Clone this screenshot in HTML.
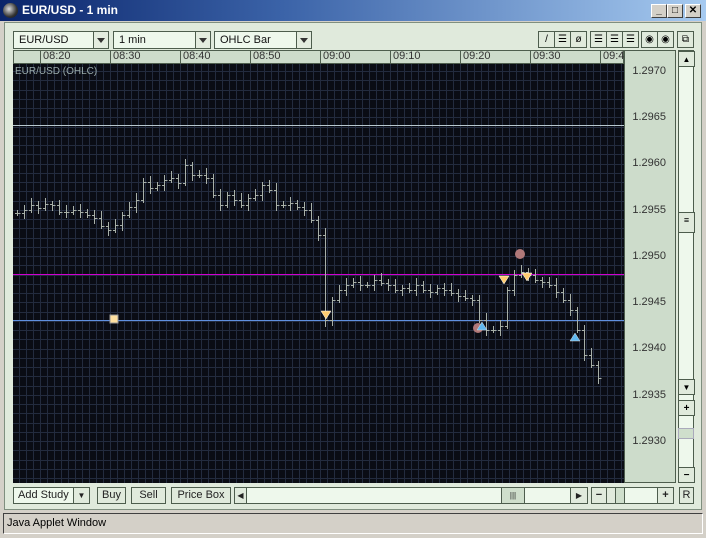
<!DOCTYPE html>
<html><head><style>
*{margin:0;padding:0;box-sizing:border-box}
body{width:706px;height:538px;overflow:hidden;background:#d4d0c8;font-family:"Liberation Sans",sans-serif;font-size:11px;position:relative}
.a{position:absolute}
.title{left:0;top:0;width:706px;height:21px;background:linear-gradient(90deg,#0a246a,#3b63a8 40%,#a6caf0);color:#fff;font-weight:bold;font-size:12px;line-height:21px;padding-left:22px}
.tb{width:16px;height:14px;top:4px;background:#d4d0c8;border:1px solid;border-color:#fff #404040 #404040 #fff;color:#000;font-size:10px;text-align:center;line-height:12px;font-weight:bold}
.main{left:4px;top:22px;width:698px;height:488px;background:#e0eadc;border:1px solid #7f8f7f}
.dd{height:18px;top:31px;background:#eef8ec;border:1px solid #4d5d4d;padding-left:5px;line-height:16px;color:#111}
.dd i{position:absolute;right:0;top:0;width:15px;height:16px;border-left:1px solid #4d5d4d;background:#e3ecdf}
.dd i:after{content:"";position:absolute;left:3px;top:6px;border:4px solid transparent;border-top:5px solid #333;border-bottom:0}
.btn{height:17px;top:487px;background:#e0eadc;border:1px solid #4d5d4d;text-align:center;line-height:15px;color:#222}
.ib{top:31px;width:17px;height:17px;border:1px solid #4d5d4d;background:#e0eadc;font-size:10px;text-align:center;line-height:15px}
.axis{background:#cddccb}
.tl{top:50px;height:14px;border-left:1px solid #4d5d4d;padding-left:2px;line-height:13px;color:#333}
.pl{left:626px;width:40px;text-align:right;color:#333}
</style></head><body>
<div class="a title">EUR/USD - 1 min</div>
<div class="a" style="left:3px;top:3px;width:15px;height:15px;border-radius:50%;background:radial-gradient(circle at 40% 40%,#ddd,#333 60%,#111)"></div>
<div class="a tb" style="left:651px">_</div>
<div class="a tb" style="left:667px">□</div>
<div class="a tb" style="left:685px">✕</div>
<div class="a main"></div>
<div class="a dd" style="left:13px;width:96px">EUR/USD<i></i></div>
<div class="a dd" style="left:113px;width:98px">1 min<i></i></div>
<div class="a dd" style="left:214px;width:98px">OHLC Bar<i></i></div>
<div class="a ib" style="left:538px">/</div><div class="a ib" style="left:554px">☰</div><div class="a ib" style="left:570px">ø</div>
<div class="a ib" style="left:590px">☰</div><div class="a ib" style="left:606px">☰</div><div class="a ib" style="left:622px">☰</div>
<div class="a ib" style="left:641px">◉</div><div class="a ib" style="left:657px">◉</div>
<div class="a ib" style="left:677px">⧉</div>
<div class="a axis" style="left:13px;top:50px;width:611px;height:14px;border:1px solid #4d5d4d"></div>
<div class="a axis" style="left:624px;top:50px;width:52px;height:433px;border:1px solid #4d5d4d"></div>
<div class="a tl" style="left:40px">08:20</div><div class="a tl" style="left:110px">08:30</div><div class="a tl" style="left:180px">08:40</div><div class="a tl" style="left:250px">08:50</div><div class="a tl" style="left:320px">09:00</div><div class="a tl" style="left:390px">09:10</div><div class="a tl" style="left:460px">09:20</div><div class="a tl" style="left:530px">09:30</div><div class="a tl" style="left:600px;width:24px;overflow:hidden">09:4</div>
<div class="a pl" style="top:65px">1.2970</div><div class="a pl" style="top:111px">1.2965</div><div class="a pl" style="top:157px">1.2960</div><div class="a pl" style="top:204px">1.2955</div><div class="a pl" style="top:250px">1.2950</div><div class="a pl" style="top:296px">1.2945</div><div class="a pl" style="top:342px">1.2940</div><div class="a pl" style="top:389px">1.2935</div><div class="a pl" style="top:435px">1.2930</div>
<svg class="a" style="left:13px;top:64px" width="611" height="419" id="ch">
<rect width="611" height="419" fill="#0a0c14"/>
<g id="grid"></g>
<text x="2" y="10" fill="#9aa" font-size="10" font-family="Liberation Sans">EUR/USD (OHLC)</text>
<line x1="0" x2="611" y1="61.5" y2="61.5" stroke="#b8c8d0"/>
<line x1="0" x2="611" y1="210.5" y2="210.5" stroke="#d000d0"/>
<line x1="0" x2="611" y1="256.5" y2="256.5" stroke="#6090e0"/>
<g id="bars" stroke="#a8b0a8" fill="none"></g>
<rect x="97" y="251" width="8" height="8" fill="#ffe0a0" stroke="#999"/>
<circle cx="465" cy="264" r="5" fill="#b07878"/><circle cx="507" cy="190" r="5" fill="#b07878"/>
<path d="M308 247h10l-5 8z M486 212h10l-5 8z M509 209h10l-5 8z" fill="#ffcc70" stroke="#fff" stroke-width=".5"/>
<path d="M464 266h10l-5-8z M557 277h10l-5-8z" fill="#60b8f0" stroke="#ddd" stroke-width=".5"/>
</svg>
<div class="a" style="left:678px;top:50px;width:16px;height:433px;background:#eef8ec;border:1px solid #4d5d4d"></div>
<div class="a ib" style="left:678px;top:51px;height:16px;font-size:8px">▲</div>
<div class="a ib" style="left:678px;top:212px;height:21px;font-size:9px">≡</div>
<div class="a ib" style="left:678px;top:379px;height:16px;font-size:8px">▼</div>
<div class="a ib" style="left:678px;top:400px;height:16px;font-weight:bold">+</div>
<div class="a" style="left:678px;top:428px;width:16px;height:11px;background:#cfdfcc;border:1px solid #aab"></div>
<div class="a ib" style="left:678px;top:467px;height:16px;font-weight:bold">−</div>
<div class="a btn" style="left:13px;width:77px;background:#eef8ec;text-align:left;padding-left:4px">Add Study</div>
<div class="a btn" style="left:73px;width:17px;font-size:8px">▼</div>
<div class="a btn" style="left:97px;width:29px">Buy</div>
<div class="a btn" style="left:131px;width:35px">Sell</div>
<div class="a btn" style="left:171px;width:60px">Price Box</div>
<div class="a btn" style="left:234px;width:354px;background:#eef8ec"></div>
<div class="a btn" style="left:234px;width:13px;font-size:8px">◀</div>
<div class="a btn" style="left:501px;width:24px;background:#cfdfcc;font-size:8px">|||</div>
<div class="a btn" style="left:570px;width:18px;font-size:8px">▶</div>
<div class="a btn" style="left:591px;width:83px;background:#eef8ec"></div>
<div class="a btn" style="left:591px;width:16px;font-weight:bold">−</div>
<div class="a btn" style="left:606px;width:10px"></div>
<div class="a btn" style="left:615px;width:10px;background:#cfdfcc"></div>
<div class="a btn" style="left:657px;width:17px;font-weight:bold">+</div>
<div class="a btn" style="left:679px;width:15px">R</div>
<div class="a" style="left:3px;top:513px;width:700px;height:21px;border:1px solid;border-color:#404040 #fff #fff #404040;padding-left:3px;line-height:19px;font-size:11px;color:#000">Java Applet Window</div>
<script>
var g=document.getElementById("grid"),s="";
for(var x=0;x<611;x+=7){var m=((x+13-40)%70==0);var xx=x+0.5+((40-13)%7);s+='<line x1="'+xx+'" x2="'+xx+'" y1="0" y2="419" stroke="'+(m?'#3a4660':'#232b3e')+'"/>';}
for(var y=7;y<419;y+=9.25){var yy=Math.round(y)+.5;s+='<line x1="0" x2="611" y1="'+yy+'" y2="'+yy+'" stroke="#232b3e"/>';}
g.innerHTML=s;
var c=[213,210,205,208,204,205,212,212,210,212,215,218,226,230,225,215,207,200,182,188,185,180,178,183,165,175,175,178,195,205,195,200,205,198,195,185,190,205,205,203,207,210,220,235,320,300,290,285,282,285,285,280,283,285,290,288,290,285,290,292,288,290,293,296,298,300,320,330,330,326,290,275,272,275,280,282,285,292,300,310,330,355,365,378];
var b="",p=213;
for(var i=0;i<c.length;i++){var x=17+i*7-13,o=p,cl=c[i],h=Math.min(o,cl)-3-(i*7%5),l=Math.max(o,cl)+3+(i*3%6);
if(i==44){h=228;l=327;o=235;}
h-=64;l-=64;var oo=o-64,cc=cl-64;
b+='<path d="M'+(x+.5)+' '+h+'V'+l+'M'+(x-2)+' '+(oo+.5)+'h2.5M'+(x+.5)+' '+(cc+.5)+'h3"/>';p=cl;}
document.getElementById("bars").innerHTML=b;
</script>
</body></html>
